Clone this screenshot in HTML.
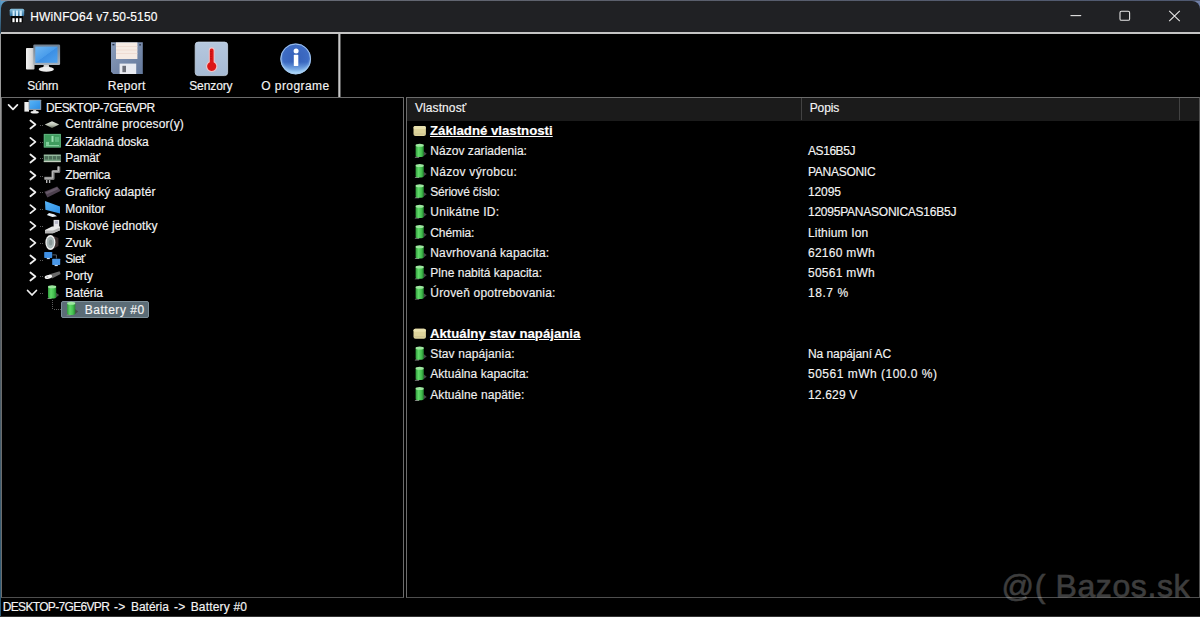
<!DOCTYPE html>
<html lang="sk"><head><meta charset="utf-8"><title>HWiNFO64 v7.50-5150</title>
<style>
html,body{margin:0;padding:0;background:#000;}
body{width:1200px;height:617px;position:relative;overflow:hidden;font-family:"Liberation Sans",sans-serif;}
.t{position:absolute;white-space:pre;-webkit-text-stroke:0.15px currentColor;}
.a{position:absolute;}
</style></head><body>
<!-- window chrome -->
<div class="a" style="left:0;top:0;width:1200px;height:10px;background:linear-gradient(90deg,#5a9ac6,#3a4a60 50%,#7080a8);"></div>
<div class="a" style="left:1px;top:1px;width:1199px;height:31px;background:#202124;border-radius:7px 8px 0 0;"></div>
<div class="a" style="left:0;top:32px;width:1200px;height:2px;background:#c4c4c4;"></div>
<div class="a" style="left:0;top:0;width:1200px;height:1px;background:linear-gradient(90deg,#8a8f9c,#6a6e78 15%,#5c606c 50%,#4e5870);"></div>
<div class="a" style="left:0;top:0;width:1px;height:617px;background:linear-gradient(180deg,#5a9ac6,#2a4a60 33px,#999 34px,#999 100px,#5a5e62 300px,#2a5a78);"></div>
<div class="a" style="left:0;top:616px;width:1200px;height:1px;background:#333;"></div>
<!-- toolbar -->
<div class="a" style="left:338px;top:34px;width:3px;height:63px;background:linear-gradient(90deg,#5a5a5a,#c8c8c8 1px,#c8c8c8 2px,#5a5a5a 2px);"></div>
<!-- tree panel -->
<div class="a" style="left:1px;top:97px;width:401px;height:499px;border:1px solid #6c6c6c;border-bottom-color:#4e4e4e;"></div>
<!-- list panel -->
<div class="a" style="left:406px;top:97px;width:792px;height:499px;border:1px solid #6c6c6c;border-right-color:#505050;border-bottom-color:#4e4e4e;"></div>
<div class="a" style="left:407px;top:98px;width:792px;height:22.5px;background:#1b1b1b;"></div>
<div class="a" style="left:801px;top:98px;width:1px;height:22px;background:#424242;"></div>
<div class="a" style="left:1179px;top:98px;width:1px;height:22px;background:#424242;"></div>
<!-- status line -->
<!-- selection -->
<div class="a" style="left:61.3px;top:300.6px;width:87.4px;height:17.4px;background:#5b6c76;border:1px solid #7d8f99;border-radius:2px;box-sizing:border-box;"></div>
<!-- title icon -->
<svg class="a" style="left:8px;top:7px" width="18" height="18" viewBox="0 0 18 18">
<defs><linearGradient id="hw" x1="0" y1="0" x2="0" y2="1"><stop offset="0" stop-color="#8cc4e0"/><stop offset="1" stop-color="#2c6c9c"/></linearGradient></defs>
<rect x="1.7" y="1.8" width="14.5" height="7.4" rx="1.5" fill="url(#hw)"/>
<rect x="3" y="9" width="12" height="6.6" fill="#050505"/>
<rect x="4.6" y="3.5" width="2" height="5.5" fill="#cfeaf8"/><rect x="8" y="3.5" width="2" height="5.5" fill="#cfeaf8"/><rect x="11.6" y="3.5" width="2.2" height="5.5" fill="#cfeaf8"/>
<rect x="4.4" y="11.2" width="2.2" height="4" fill="#fff"/><rect x="7.9" y="11.2" width="2.2" height="4" fill="#fff"/><rect x="11.4" y="11.2" width="2.2" height="4" fill="#fff"/>
</svg>
<!-- window buttons -->
<svg class="a" style="left:1060px;top:4px" width="130" height="24" viewBox="0 0 130 24">
<path d="M10.5 11.6H21.2" stroke="#e6e6e6" stroke-width="1.1" fill="none"/>
<rect x="60" y="7.3" width="9.6" height="9" rx="1.4" stroke="#e6e6e6" stroke-width="1.1" fill="none"/>
<path d="M109.2 6.8L119.8 17.2M119.8 6.8L109.2 17.2" stroke="#e6e6e6" stroke-width="1.1" fill="none"/>
</svg>
<!-- toolbar icons -->
<svg class="a" style="left:22px;top:40px" width="42" height="36" viewBox="22 40 42 36">
<defs>
<linearGradient id="scr" x1="0" y1="0" x2="1" y2="1"><stop offset="0" stop-color="#6db6f4"/><stop offset="0.5" stop-color="#4a9deb"/><stop offset="0.52" stop-color="#3c8fe4"/><stop offset="1" stop-color="#4fa2ee"/></linearGradient>
<linearGradient id="twr" x1="0" y1="0" x2="1" y2="0"><stop offset="0" stop-color="#f4f4f4"/><stop offset="0.6" stop-color="#dcdcdc"/><stop offset="1" stop-color="#bdbdbd"/></linearGradient>
<linearGradient id="frm" x1="0" y1="0" x2="0" y2="1"><stop offset="0" stop-color="#6f7f90"/><stop offset="1" stop-color="#a9b3bd"/></linearGradient>
</defs>
<rect x="26" y="48" width="8.5" height="21.5" rx="0.8" fill="url(#twr)"/>
<rect x="33.3" y="44.6" width="26.8" height="20.3" rx="1.2" fill="url(#frm)"/>
<rect x="35.3" y="46.6" width="22.2" height="16.2" fill="url(#scr)"/>
<path d="M43.8 64.9h5l0.8 3.4h-6.6z" fill="#d4d4d4"/>
<ellipse cx="46.3" cy="69.2" rx="7.6" ry="2.5" fill="#ededed"/>
</svg>
<svg class="a" style="left:109px;top:40px" width="36" height="36" viewBox="109 40 36 36">
<defs><linearGradient id="fl" x1="0" y1="0" x2="1" y2="1"><stop offset="0" stop-color="#8a9cba"/><stop offset="1" stop-color="#64799c"/></linearGradient></defs>
<path d="M111 42.2h31.8v31.8h-29.6l-2.2-2.2z" fill="url(#fl)"/>
<rect x="116" y="42.4" width="21.4" height="16.6" fill="#f6ebe4"/>
<path d="M116 46.5h21.4M116 50h21.4M116 53.5h21.4" stroke="#ecd6cc" stroke-width="0.7"/>
<rect x="119.6" y="63.6" width="16.6" height="10.4" fill="#e9ebf1"/>
<rect x="122.4" y="65.8" width="3.6" height="6.4" fill="#6d6f78"/>
<rect x="112.4" y="44" width="2" height="1.4" fill="#2a3346"/><rect x="139.4" y="44" width="1.4" height="1.6" fill="#2a3346"/>
</svg>
<svg class="a" style="left:193px;top:40px" width="38" height="38" viewBox="193 40 38 38">
<defs><linearGradient id="th" x1="0" y1="0" x2="0" y2="1"><stop offset="0" stop-color="#b6c8de"/><stop offset="1" stop-color="#a6bad4"/></linearGradient></defs>
<rect x="195.2" y="42.1" width="32.4" height="33.5" rx="3" fill="url(#th)" stroke="#c9d7e6" stroke-width="0.8"/>
<path d="M208.8 50.2a2.9 2.9 0 0 1 5.8 0v11.2a5.7 5.7 0 1 1-5.8 0z" fill="#f4c4c6"/>
<path d="M209.8 50.4a1.9 1.9 0 0 1 3.8 0v11.8a4.6 4.6 0 1 1-3.8 0z" fill="#dc1616"/>
<path d="M211 51v9" stroke="#a80c0c" stroke-width="1" stroke-dasharray="1.2 1.2"/>
</svg>
<svg class="a" style="left:278px;top:41px" width="36" height="36" viewBox="278 41 36 36">
<defs><radialGradient id="inf" cx="0.5" cy="0.45" r="0.55"><stop offset="0" stop-color="#3560b8"/><stop offset="0.75" stop-color="#3e6cc4"/><stop offset="1" stop-color="#86b4ea"/></radialGradient>
<linearGradient id="inf2" x1="0" y1="0" x2="0" y2="1"><stop offset="0.6" stop-color="#9ad4ff" stop-opacity="0"/><stop offset="1" stop-color="#b8e4ff" stop-opacity="0.9"/></linearGradient></defs>
<circle cx="295.7" cy="58.9" r="15.3" fill="url(#inf)"/>
<circle cx="295.7" cy="58.9" r="15.3" fill="url(#inf2)"/>
<circle cx="295.7" cy="58.9" r="14.9" fill="none" stroke="#a9c9ee" stroke-width="0.9"/>
<circle cx="296.1" cy="51" r="2.5" fill="#fff"/>
<rect x="293.8" y="54.8" width="4.5" height="11.2" rx="0.6" fill="#fff"/>
</svg>
<svg width="0" height="0" style="position:absolute"><defs>
<linearGradient id="bat" x1="0" y1="0" x2="1" y2="0"><stop offset="0" stop-color="#2f9e3c"/><stop offset="0.35" stop-color="#5fd868"/><stop offset="0.7" stop-color="#45c050"/><stop offset="1" stop-color="#23852f"/></linearGradient>
<linearGradient id="mon" x1="0" y1="0" x2="1" y2="1"><stop offset="0" stop-color="#58b4f6"/><stop offset="1" stop-color="#2c8ee6"/></linearGradient>
<linearGradient id="cpu" x1="0" y1="0" x2="0" y2="1"><stop offset="0" stop-color="#dfe3da"/><stop offset="0.55" stop-color="#b9c0b2"/><stop offset="1" stop-color="#59604f"/></linearGradient>
</defs></svg>
<svg class="a" style="left:6px;top:101px" width="16" height="12" viewBox="6 101 16 12"><path d="M8.6 104.9L13.0 109.4L17.4 104.9" stroke="#f0f0f0" stroke-width="1.75" fill="none" stroke-linecap="round" stroke-linejoin="round"/></svg>
<svg class="a" style="left:23px;top:98px" width="20" height="17" viewBox="23 98 20 17">
<rect x="24.4" y="102" width="4.6" height="9.6" fill="#eeeeee"/>
<rect x="28.6" y="99.7" width="12.6" height="10.3" rx="0.6" fill="#8a97a6"/>
<rect x="29.6" y="100.5" width="10.6" height="8.4" fill="url(#mon)"/>
<path d="M33.4 110h2.6l0.6 1.6h-3.8z" fill="#cfcfcf"/>
<ellipse cx="34.7" cy="112.3" rx="4.2" ry="1.2" fill="#f0f0f0"/></svg>
<svg class="a" style="left:28px;top:117px" width="12" height="14" viewBox="28 117 12 14"><path d="M30.4 120.50000000000001L35.4 124.50000000000001L30.4 128.5" stroke="#f0f0f0" stroke-width="1.75" fill="none" stroke-linecap="round" stroke-linejoin="round"/></svg>
<div class="a" style="left:40px;top:125px;width:1px;height:1px;background:#5c5c5c"></div><div class="a" style="left:42px;top:125px;width:1px;height:1px;background:#5c5c5c"></div>
<svg class="a" style="left:28px;top:134px" width="12" height="14" viewBox="28 134 12 14"><path d="M30.4 137.89999999999998L35.4 141.89999999999998L30.4 145.89999999999998" stroke="#f0f0f0" stroke-width="1.75" fill="none" stroke-linecap="round" stroke-linejoin="round"/></svg>
<div class="a" style="left:40px;top:142px;width:1px;height:1px;background:#5c5c5c"></div><div class="a" style="left:42px;top:142px;width:1px;height:1px;background:#5c5c5c"></div>
<svg class="a" style="left:28px;top:151px" width="12" height="14" viewBox="28 151 12 14"><path d="M30.4 154.5L35.4 158.5L30.4 162.5" stroke="#f0f0f0" stroke-width="1.75" fill="none" stroke-linecap="round" stroke-linejoin="round"/></svg>
<div class="a" style="left:40px;top:158px;width:1px;height:1px;background:#5c5c5c"></div><div class="a" style="left:42px;top:158px;width:1px;height:1px;background:#5c5c5c"></div>
<svg class="a" style="left:28px;top:168px" width="12" height="14" viewBox="28 168 12 14"><path d="M30.4 171.5L35.4 175.5L30.4 179.5" stroke="#f0f0f0" stroke-width="1.75" fill="none" stroke-linecap="round" stroke-linejoin="round"/></svg>
<div class="a" style="left:40px;top:176px;width:1px;height:1px;background:#5c5c5c"></div><div class="a" style="left:42px;top:176px;width:1px;height:1px;background:#5c5c5c"></div>
<svg class="a" style="left:28px;top:185px" width="12" height="14" viewBox="28 185 12 14"><path d="M30.4 188.2L35.4 192.2L30.4 196.2" stroke="#f0f0f0" stroke-width="1.75" fill="none" stroke-linecap="round" stroke-linejoin="round"/></svg>
<div class="a" style="left:40px;top:192px;width:1px;height:1px;background:#5c5c5c"></div><div class="a" style="left:42px;top:192px;width:1px;height:1px;background:#5c5c5c"></div>
<svg class="a" style="left:28px;top:202px" width="12" height="14" viewBox="28 202 12 14"><path d="M30.4 205.1L35.4 209.1L30.4 213.1" stroke="#f0f0f0" stroke-width="1.75" fill="none" stroke-linecap="round" stroke-linejoin="round"/></svg>
<div class="a" style="left:40px;top:209px;width:1px;height:1px;background:#5c5c5c"></div><div class="a" style="left:42px;top:209px;width:1px;height:1px;background:#5c5c5c"></div>
<svg class="a" style="left:28px;top:218px" width="12" height="14" viewBox="28 218 12 14"><path d="M30.4 221.89999999999998L35.4 225.89999999999998L30.4 229.89999999999998" stroke="#f0f0f0" stroke-width="1.75" fill="none" stroke-linecap="round" stroke-linejoin="round"/></svg>
<div class="a" style="left:40px;top:226px;width:1px;height:1px;background:#5c5c5c"></div><div class="a" style="left:42px;top:226px;width:1px;height:1px;background:#5c5c5c"></div>
<svg class="a" style="left:28px;top:235px" width="12" height="14" viewBox="28 235 12 14"><path d="M30.4 238.89999999999998L35.4 242.89999999999998L30.4 246.89999999999998" stroke="#f0f0f0" stroke-width="1.75" fill="none" stroke-linecap="round" stroke-linejoin="round"/></svg>
<div class="a" style="left:40px;top:243px;width:1px;height:1px;background:#5c5c5c"></div><div class="a" style="left:42px;top:243px;width:1px;height:1px;background:#5c5c5c"></div>
<svg class="a" style="left:28px;top:252px" width="12" height="14" viewBox="28 252 12 14"><path d="M30.4 255.5L35.4 259.5L30.4 263.5" stroke="#f0f0f0" stroke-width="1.75" fill="none" stroke-linecap="round" stroke-linejoin="round"/></svg>
<div class="a" style="left:40px;top:260px;width:1px;height:1px;background:#5c5c5c"></div><div class="a" style="left:42px;top:260px;width:1px;height:1px;background:#5c5c5c"></div>
<svg class="a" style="left:28px;top:269px" width="12" height="14" viewBox="28 269 12 14"><path d="M30.4 272.5L35.4 276.5L30.4 280.5" stroke="#f0f0f0" stroke-width="1.75" fill="none" stroke-linecap="round" stroke-linejoin="round"/></svg>
<div class="a" style="left:40px;top:276px;width:1px;height:1px;background:#5c5c5c"></div><div class="a" style="left:42px;top:276px;width:1px;height:1px;background:#5c5c5c"></div>
<svg class="a" style="left:25px;top:287px" width="16" height="12" viewBox="25 287 16 12"><path d="M27.6 290.5L32.0 295.0L36.400000000000006 290.5" stroke="#f0f0f0" stroke-width="1.75" fill="none" stroke-linecap="round" stroke-linejoin="round"/></svg>
<div class="a" style="left:40px;top:293px;width:1px;height:1px;background:#5c5c5c"></div><div class="a" style="left:42px;top:293px;width:1px;height:1px;background:#5c5c5c"></div>
<svg class="a" style="left:43px;top:118px" width="18" height="12" viewBox="43 118 18 12"><path d="M44.8 124.50000000000001L52 121.30000000000001L59.2 124.50000000000001L52 128.10000000000002z" fill="url(#cpu)"/></svg>
<svg class="a" style="left:43px;top:133px" width="19" height="17" viewBox="43 133 19 17"><rect x="43.8" y="133.89999999999998" width="17" height="13.6" fill="#3f9c5e"/>
<rect x="44.3" y="134.39999999999998" width="16" height="12.6" fill="none" stroke="#5fb37e" stroke-width="0.9"/>
<rect x="51.5" y="135.89999999999998" width="2" height="6" fill="#9be0b0"/><rect x="55" y="136.89999999999998" width="4" height="5" fill="#5fb87e"/><rect x="46" y="141.89999999999998" width="3" height="3" fill="#7fd09a"/>
<rect x="46" y="145.09999999999997" width="13" height="1" fill="#8fd8a8"/></svg>
<svg class="a" style="left:43px;top:153px" width="19" height="10" viewBox="43 153 19 10"><rect x="43.8" y="154.7" width="17" height="7.4" fill="#6f9a7b"/>
<rect x="45" y="156.1" width="3" height="3.4" fill="#4c6c58"/><rect x="49" y="156.1" width="3" height="3.4" fill="#4c6c58"/><rect x="53" y="156.1" width="3" height="3.4" fill="#4c6c58"/><rect x="57" y="156.1" width="3" height="3.4" fill="#4c6c58"/>
<rect x="43.8" y="154.7" width="17" height="1" fill="#a9c7b0"/><rect x="43.8" y="160.9" width="17" height="1.2" fill="#c4d0c0"/></svg>
<svg class="a" style="left:43px;top:165px" width="19" height="19" viewBox="43 165 19 19"><path d="M46.7 179.5v3.4M49.6 179.5v3.4" stroke="#b4b4b4" stroke-width="1.4" fill="none"/>
<path d="M44.4 178.4H53V171.5H58.7V166.4" stroke="#7e7e7e" stroke-width="3.2" fill="none" stroke-linejoin="round"/>
<path d="M44.4 178.1H52.7V171.2H58.4V166.4" stroke="#c4c4c4" stroke-width="1" fill="none" stroke-linejoin="round"/></svg>
<svg class="a" style="left:43px;top:185px" width="19" height="14" viewBox="43 185 19 14"><path d="M44.4 191.79999999999998L57.2 186.6L60.8 190.79999999999998L47.4 197.39999999999998z" fill="#4c404e"/>
<path d="M45.4 192.2L57 187.2L58.6 189.0L46.8 194.2z" fill="#6e6070" opacity="0.8"/></svg>
<svg class="a" style="left:43px;top:200px" width="19" height="18" viewBox="43 200 19 18"><path d="M45 200.9L60 206.5V213.5L45.4 209.7z" fill="url(#mon)"/>
<path d="M49 212.9l5 1.4l3 2l-4.6 0.8l-5.6-2.2z" fill="#e8f2fa"/></svg>
<svg class="a" style="left:43px;top:218px" width="19" height="16" viewBox="43 218 19 16"><rect x="53.6" y="219.89999999999998" width="5.6" height="8" fill="#e4e4e8"/><rect x="54.8" y="220.89999999999998" width="3.2" height="3" fill="#b8b8c8"/>
<path d="M45 229.89999999999998L52 226.49999999999997H60V230.29999999999998L53 233.29999999999998H45z" fill="#e9e9e9"/><path d="M45 230.49999999999997H53L60 227.49999999999997V230.29999999999998L53 233.29999999999998H45z" fill="#b4b4b4"/></svg>
<svg class="a" style="left:43px;top:233px" width="19" height="18" viewBox="43 233 19 18"><path d="M51 234.89999999999998L58.4 237.89999999999998V245.89999999999998L51 250.29999999999998z" fill="#3a2e2e"/>
<ellipse cx="50.4" cy="242.49999999999997" rx="5" ry="7.4" fill="#f2f2f2"/><ellipse cx="50.4" cy="242.49999999999997" rx="3.8" ry="6" fill="#a9b6b6"/><ellipse cx="50.6" cy="242.49999999999997" rx="1.8" ry="3" fill="#8a9898"/></svg>
<svg class="a" style="left:43px;top:250px" width="19" height="18" viewBox="43 250 19 18"><rect x="44.2" y="251.9" width="8" height="6" rx="0.6" fill="#3e8ee2"/><rect x="46.8" y="257.9" width="3" height="1.2" fill="#c8d8e8"/>
<rect x="52.2" y="258.7" width="8" height="6.2" rx="0.6" fill="#4a98e8"/><rect x="54.6" y="264.9" width="3.2" height="1.2" fill="#c8d8e8"/>
<path d="M52.4 254.9h4v3.6" stroke="#6a7a8a" stroke-width="0.8" fill="none"/></svg>
<svg class="a" style="left:43px;top:270px" width="19" height="12" viewBox="43 270 19 12"><path d="M49 274.5L59.6 271.3L60.6 273.9L52 278.5z" fill="#6a6a6a"/>
<ellipse cx="48.4" cy="276.9" rx="3.8" ry="1.9" fill="#f4f4f4" transform="rotate(-12 48.4 276.9)"/><ellipse cx="47.4" cy="277.1" rx="1.1" ry="0.6" fill="#9a9a9a"/></svg>
<svg class="a" style="left:46px;top:284px" width="16" height="18" viewBox="46 284 16 18"><path d="M55.7 292.5l3.4 2.6l-3.4 2.6z" fill="#4a4a4a"/><path d="M47 299.1h4.51v-1.2h-3.28z" fill="#8a8a8a"/><path d="M48 286.7v10.3a4.1 1.5 0 0 0 8.2 0v-10.3z" fill="url(#bat)"/><ellipse cx="52.1" cy="286.7" rx="4.1" ry="1.5" fill="#9ee8a0"/></svg>
<div class="a" style="left:52px;top:300px;width:1px;height:1px;background:#5c5c5c"></div><div class="a" style="left:52px;top:302px;width:1px;height:1px;background:#5c5c5c"></div><div class="a" style="left:52px;top:304px;width:1px;height:1px;background:#5c5c5c"></div><div class="a" style="left:52px;top:306px;width:1px;height:1px;background:#5c5c5c"></div><div class="a" style="left:52px;top:308px;width:1px;height:1px;background:#5c5c5c"></div><div class="a" style="left:54px;top:309px;width:1px;height:1px;background:#5c5c5c"></div><div class="a" style="left:56px;top:309px;width:1px;height:1px;background:#5c5c5c"></div><div class="a" style="left:58px;top:309px;width:1px;height:1px;background:#5c5c5c"></div><div class="a" style="left:60px;top:309px;width:1px;height:1px;background:#5c5c5c"></div>
<svg class="a" style="left:65px;top:300px" width="16" height="18" viewBox="65 300 16 18"><path d="M74.8 309.0l3.4 2.6l-3.4 2.6z" fill="#4a4a4a"/><path d="M66.1 315.6h4.51v-1.2h-3.28z" fill="#8a8a8a"/><path d="M67.1 303.2v10.3a4.1 1.5 0 0 0 8.2 0v-10.3z" fill="url(#bat)"/><ellipse cx="71.19999999999999" cy="303.2" rx="4.1" ry="1.5" fill="#9ee8a0"/></svg>
<svg class="a" style="left:412px;top:124px" width="16" height="13" viewBox="412 124 16 13"><rect x="413.5" y="125.95" width="12.4" height="10" rx="2" fill="#ddd39a"/>
<rect x="413.5" y="125.95" width="12.4" height="3" rx="1.5" fill="#e9e1ae"/><rect x="414.1" y="133.35" width="11.2" height="1.4" fill="#cfc692"/></svg>
<svg class="a" style="left:413px;top:142px" width="16" height="18" viewBox="413 142 16 18"><path d="M423.3 151.12000000000003l3.4 2.6l-3.4 2.6z" fill="#4a4a4a"/><path d="M414.6 157.72000000000003h4.51v-1.2h-3.28z" fill="#8a8a8a"/><path d="M415.6 145.32000000000002v10.3a4.1 1.5 0 0 0 8.2 0v-10.3z" fill="url(#bat)"/><ellipse cx="419.70000000000005" cy="145.32000000000002" rx="4.1" ry="1.5" fill="#9ee8a0"/></svg>
<svg class="a" style="left:413px;top:163px" width="16" height="18" viewBox="413 163 16 18"><path d="M423.3 171.39000000000001l3.4 2.6l-3.4 2.6z" fill="#4a4a4a"/><path d="M414.6 177.99h4.51v-1.2h-3.28z" fill="#8a8a8a"/><path d="M415.6 165.59v10.3a4.1 1.5 0 0 0 8.2 0v-10.3z" fill="url(#bat)"/><ellipse cx="419.70000000000005" cy="165.59" rx="4.1" ry="1.5" fill="#9ee8a0"/></svg>
<svg class="a" style="left:413px;top:183px" width="16" height="18" viewBox="413 183 16 18"><path d="M423.3 191.66000000000003l3.4 2.6l-3.4 2.6z" fill="#4a4a4a"/><path d="M414.6 198.26000000000002h4.51v-1.2h-3.28z" fill="#8a8a8a"/><path d="M415.6 185.86v10.3a4.1 1.5 0 0 0 8.2 0v-10.3z" fill="url(#bat)"/><ellipse cx="419.70000000000005" cy="185.86" rx="4.1" ry="1.5" fill="#9ee8a0"/></svg>
<svg class="a" style="left:413px;top:203px" width="16" height="18" viewBox="413 203 16 18"><path d="M423.3 211.93l3.4 2.6l-3.4 2.6z" fill="#4a4a4a"/><path d="M414.6 218.53h4.51v-1.2h-3.28z" fill="#8a8a8a"/><path d="M415.6 206.13v10.3a4.1 1.5 0 0 0 8.2 0v-10.3z" fill="url(#bat)"/><ellipse cx="419.70000000000005" cy="206.13" rx="4.1" ry="1.5" fill="#9ee8a0"/></svg>
<svg class="a" style="left:413px;top:223px" width="16" height="18" viewBox="413 223 16 18"><path d="M423.3 232.20000000000002l3.4 2.6l-3.4 2.6z" fill="#4a4a4a"/><path d="M414.6 238.8h4.51v-1.2h-3.28z" fill="#8a8a8a"/><path d="M415.6 226.4v10.3a4.1 1.5 0 0 0 8.2 0v-10.3z" fill="url(#bat)"/><ellipse cx="419.70000000000005" cy="226.4" rx="4.1" ry="1.5" fill="#9ee8a0"/></svg>
<svg class="a" style="left:413px;top:244px" width="16" height="18" viewBox="413 244 16 18"><path d="M423.3 252.46999999999997l3.4 2.6l-3.4 2.6z" fill="#4a4a4a"/><path d="M414.6 259.07h4.51v-1.2h-3.28z" fill="#8a8a8a"/><path d="M415.6 246.67v10.3a4.1 1.5 0 0 0 8.2 0v-10.3z" fill="url(#bat)"/><ellipse cx="419.70000000000005" cy="246.67" rx="4.1" ry="1.5" fill="#9ee8a0"/></svg>
<svg class="a" style="left:413px;top:264px" width="16" height="18" viewBox="413 264 16 18"><path d="M423.3 272.73999999999995l3.4 2.6l-3.4 2.6z" fill="#4a4a4a"/><path d="M414.6 279.34h4.51v-1.2h-3.28z" fill="#8a8a8a"/><path d="M415.6 266.93999999999994v10.3a4.1 1.5 0 0 0 8.2 0v-10.3z" fill="url(#bat)"/><ellipse cx="419.70000000000005" cy="266.93999999999994" rx="4.1" ry="1.5" fill="#9ee8a0"/></svg>
<svg class="a" style="left:413px;top:284px" width="16" height="18" viewBox="413 284 16 18"><path d="M423.3 293.00999999999993l3.4 2.6l-3.4 2.6z" fill="#4a4a4a"/><path d="M414.6 299.60999999999996h4.51v-1.2h-3.28z" fill="#8a8a8a"/><path d="M415.6 287.2099999999999v10.3a4.1 1.5 0 0 0 8.2 0v-10.3z" fill="url(#bat)"/><ellipse cx="419.70000000000005" cy="287.2099999999999" rx="4.1" ry="1.5" fill="#9ee8a0"/></svg>
<svg class="a" style="left:412px;top:327px" width="16" height="13" viewBox="412 327 16 13"><rect x="413.5" y="328.65" width="12.4" height="10" rx="2" fill="#ddd39a"/>
<rect x="413.5" y="328.65" width="12.4" height="3" rx="1.5" fill="#e9e1ae"/><rect x="414.1" y="336.04999999999995" width="11.2" height="1.4" fill="#cfc692"/></svg>
<svg class="a" style="left:413px;top:345px" width="16" height="18" viewBox="413 345 16 18"><path d="M423.3 353.82l3.4 2.6l-3.4 2.6z" fill="#4a4a4a"/><path d="M414.6 360.42h4.51v-1.2h-3.28z" fill="#8a8a8a"/><path d="M415.6 348.02v10.3a4.1 1.5 0 0 0 8.2 0v-10.3z" fill="url(#bat)"/><ellipse cx="419.70000000000005" cy="348.02" rx="4.1" ry="1.5" fill="#9ee8a0"/></svg>
<svg class="a" style="left:413px;top:365px" width="16" height="18" viewBox="413 365 16 18"><path d="M423.3 374.09l3.4 2.6l-3.4 2.6z" fill="#4a4a4a"/><path d="M414.6 380.69h4.51v-1.2h-3.28z" fill="#8a8a8a"/><path d="M415.6 368.28999999999996v10.3a4.1 1.5 0 0 0 8.2 0v-10.3z" fill="url(#bat)"/><ellipse cx="419.70000000000005" cy="368.28999999999996" rx="4.1" ry="1.5" fill="#9ee8a0"/></svg>
<svg class="a" style="left:413px;top:386px" width="16" height="18" viewBox="413 386 16 18"><path d="M423.3 394.35999999999996l3.4 2.6l-3.4 2.6z" fill="#4a4a4a"/><path d="M414.6 400.96h4.51v-1.2h-3.28z" fill="#8a8a8a"/><path d="M415.6 388.55999999999995v10.3a4.1 1.5 0 0 0 8.2 0v-10.3z" fill="url(#bat)"/><ellipse cx="419.70000000000005" cy="388.55999999999995" rx="4.1" ry="1.5" fill="#9ee8a0"/></svg>
<span class="t" style="left:30.30px;top:10px;font-size:12px;line-height:14px;letter-spacing:0.131px;color:#ffffff;">HWiNFO64 v7.50-5150</span>
<span class="t" style="left:27.30px;top:79px;font-size:12px;line-height:14px;letter-spacing:-0.204px;color:#f4f4f4;">Súhrn</span>
<span class="t" style="left:107.70px;top:79px;font-size:12px;line-height:14px;letter-spacing:0.330px;color:#f4f4f4;">Report</span>
<span class="t" style="left:189.20px;top:79px;font-size:12px;line-height:14px;letter-spacing:-0.103px;color:#f4f4f4;">Senzory</span>
<span class="t" style="left:261.30px;top:79px;font-size:12px;line-height:14px;letter-spacing:0.427px;color:#f4f4f4;">O programe</span>
<span class="t" style="left:46.00px;top:101px;font-size:12px;line-height:14px;letter-spacing:-0.519px;color:#f4f4f4;">DESKTOP-7GE6VPR</span>
<span class="t" style="left:65.30px;top:117px;font-size:12px;line-height:14px;letter-spacing:0.126px;color:#f4f4f4;">Centrálne procesor(y)</span>
<span class="t" style="left:65.30px;top:135px;font-size:12px;line-height:14px;letter-spacing:-0.094px;color:#f4f4f4;">Základná doska</span>
<span class="t" style="left:65.30px;top:151px;font-size:12px;line-height:14px;letter-spacing:-0.230px;color:#f4f4f4;">Pamäť</span>
<span class="t" style="left:65.30px;top:168px;font-size:12px;line-height:14px;letter-spacing:-0.211px;color:#f4f4f4;">Zbernica</span>
<span class="t" style="left:65.30px;top:185px;font-size:12px;line-height:14px;letter-spacing:0.141px;color:#f4f4f4;">Grafický adaptér</span>
<span class="t" style="left:65.30px;top:202px;font-size:12px;line-height:14px;letter-spacing:-0.045px;color:#f4f4f4;">Monitor</span>
<span class="t" style="left:65.30px;top:219px;font-size:12px;line-height:14px;letter-spacing:0.099px;color:#f4f4f4;">Diskové jednotky</span>
<span class="t" style="left:65.30px;top:236px;font-size:12px;line-height:14px;letter-spacing:0.074px;color:#f4f4f4;">Zvuk</span>
<span class="t" style="left:65.30px;top:252px;font-size:12px;line-height:14px;letter-spacing:-0.536px;color:#f4f4f4;">Sieť</span>
<span class="t" style="left:65.30px;top:269px;font-size:12px;line-height:14px;letter-spacing:-0.062px;color:#f4f4f4;">Porty</span>
<span class="t" style="left:65.30px;top:286px;font-size:12px;line-height:14px;letter-spacing:-0.046px;color:#f4f4f4;">Batéria</span>
<span class="t" style="left:84.70px;top:303px;font-size:12px;line-height:14px;letter-spacing:0.530px;color:#f4f4f4;">Battery #0</span>
<span class="t" style="left:430.30px;top:124px;font-size:12px;line-height:14px;color:#ffffff;font-weight:bold;transform:scaleX(1.1017);transform-origin:0 0;text-decoration:underline;text-decoration-thickness:1px;text-underline-offset:1px;">Základné vlastnosti</span>
<span class="t" style="left:430.30px;top:144px;font-size:12px;line-height:14px;letter-spacing:0.038px;color:#f0f0f0;">Názov zariadenia:</span>
<span class="t" style="left:808.00px;top:144px;font-size:12px;line-height:14px;letter-spacing:-0.433px;color:#f4f4f4;">AS16B5J</span>
<span class="t" style="left:430.30px;top:165px;font-size:12px;line-height:14px;letter-spacing:0.286px;color:#f0f0f0;">Názov výrobcu:</span>
<span class="t" style="left:808.00px;top:165px;font-size:12px;line-height:14px;letter-spacing:-0.277px;color:#f4f4f4;">PANASONIC</span>
<span class="t" style="left:430.30px;top:185px;font-size:12px;line-height:14px;letter-spacing:-0.195px;color:#f0f0f0;">Sériové číslo:</span>
<span class="t" style="left:808.00px;top:185px;font-size:12px;line-height:14px;letter-spacing:-0.114px;color:#f4f4f4;">12095</span>
<span class="t" style="left:430.30px;top:205px;font-size:12px;line-height:14px;letter-spacing:0.248px;color:#f0f0f0;">Unikátne ID:</span>
<span class="t" style="left:808.00px;top:205px;font-size:12px;line-height:14px;letter-spacing:-0.238px;color:#f4f4f4;">12095PANASONICAS16B5J</span>
<span class="t" style="left:430.30px;top:226px;font-size:12px;line-height:14px;letter-spacing:-0.098px;color:#f0f0f0;">Chémia:</span>
<span class="t" style="left:808.00px;top:226px;font-size:12px;line-height:14px;letter-spacing:0.146px;color:#f4f4f4;">Lithium Ion</span>
<span class="t" style="left:430.30px;top:246px;font-size:12px;line-height:14px;letter-spacing:0.147px;color:#f0f0f0;">Navrhovaná kapacita:</span>
<span class="t" style="left:808.00px;top:246px;font-size:12px;line-height:14px;letter-spacing:0.256px;color:#f4f4f4;">62160 mWh</span>
<span class="t" style="left:430.30px;top:266px;font-size:12px;line-height:14px;letter-spacing:0.014px;color:#f0f0f0;">Plne nabitá kapacita:</span>
<span class="t" style="left:808.00px;top:266px;font-size:12px;line-height:14px;letter-spacing:0.256px;color:#f4f4f4;">50561 mWh</span>
<span class="t" style="left:430.30px;top:286px;font-size:12px;line-height:14px;letter-spacing:0.185px;color:#f0f0f0;">Úroveň opotrebovania:</span>
<span class="t" style="left:808.00px;top:286px;font-size:12px;line-height:14px;letter-spacing:0.557px;color:#f4f4f4;">18.7 %</span>
<span class="t" style="left:430.30px;top:327px;font-size:12px;line-height:14px;color:#ffffff;font-weight:bold;transform:scaleX(1.0994);transform-origin:0 0;text-decoration:underline;text-decoration-thickness:1px;text-underline-offset:1px;">Aktuálny stav napájania</span>
<span class="t" style="left:430.30px;top:347px;font-size:12px;line-height:14px;letter-spacing:0.105px;color:#f0f0f0;">Stav napájania:</span>
<span class="t" style="left:808.00px;top:347px;font-size:12px;line-height:14px;letter-spacing:-0.073px;color:#f4f4f4;">Na napájaní AC</span>
<span class="t" style="left:430.30px;top:367px;font-size:12px;line-height:14px;letter-spacing:0.035px;color:#f0f0f0;">Aktuálna kapacita:</span>
<span class="t" style="left:808.00px;top:367px;font-size:12px;line-height:14px;letter-spacing:0.497px;color:#f4f4f4;">50561 mWh (100.0 %)</span>
<span class="t" style="left:430.30px;top:388px;font-size:12px;line-height:14px;letter-spacing:0.074px;color:#f0f0f0;">Aktuálne napätie:</span>
<span class="t" style="left:808.00px;top:388px;font-size:12px;line-height:14px;letter-spacing:0.182px;color:#f4f4f4;">12.629 V</span>
<span class="t" style="left:415.00px;top:101px;font-size:12px;line-height:14px;letter-spacing:0.086px;color:#f4f4f4;">Vlastnosť</span>
<span class="t" style="left:809.70px;top:101px;font-size:12px;line-height:14px;letter-spacing:-0.104px;color:#f4f4f4;">Popis</span>
<span class="t" style="left:2.75px;top:600px;font-size:12px;line-height:14px;letter-spacing:-0.672px;color:#f4f4f4;">DESKTOP-7GE6VPR</span>
<span class="t" style="left:114.00px;top:600px;font-size:12px;line-height:14px;letter-spacing:0.148px;color:#f4f4f4;">-&gt;</span>
<span class="t" style="left:130.90px;top:600px;font-size:12px;line-height:14px;letter-spacing:-0.003px;color:#f4f4f4;">Batéria</span>
<span class="t" style="left:174.00px;top:600px;font-size:12px;line-height:14px;letter-spacing:0.148px;color:#f4f4f4;">-&gt;</span>
<span class="t" style="left:190.70px;top:600px;font-size:12px;line-height:14px;letter-spacing:0.170px;color:#f4f4f4;">Battery #0</span>
<span class="t" style="left:1001.60px;top:568px;font-size:32px;line-height:36px;letter-spacing:0.613px;color:#ffffff;-webkit-text-stroke:0.5px #fff;opacity:0.24;z-index:5;">@( Bazos.sk</span>
</body></html>
